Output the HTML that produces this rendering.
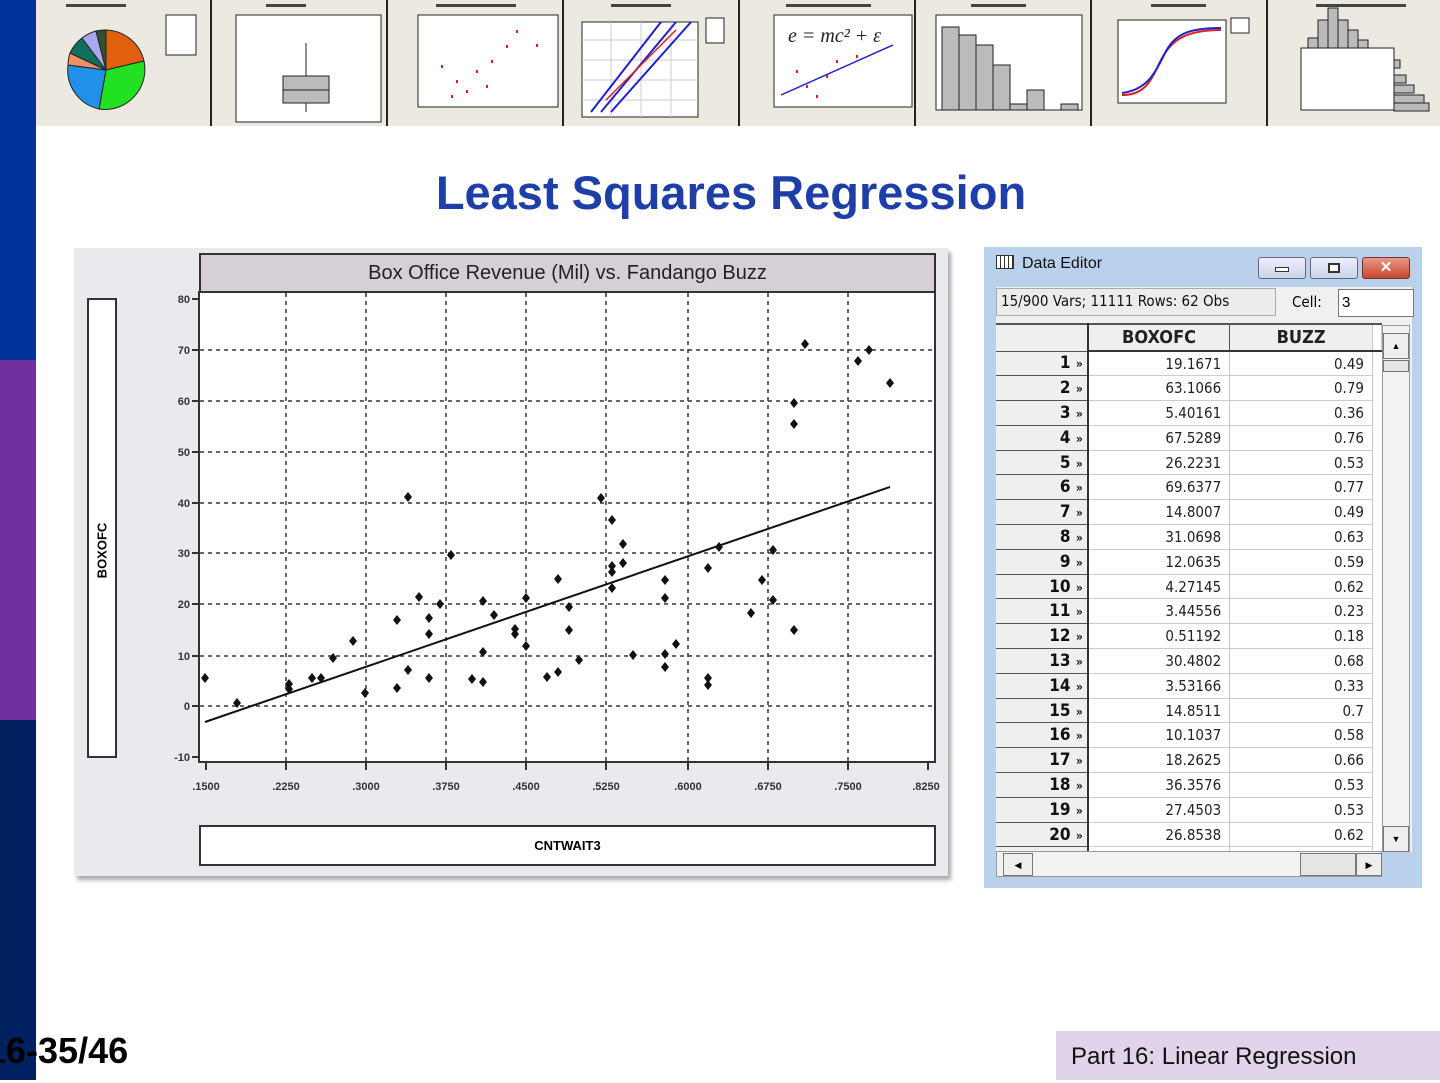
<!DOCTYPE html>
<html><head><meta charset="utf-8"><style>
*{margin:0;padding:0;box-sizing:border-box}
body{width:1440px;height:1080px;position:relative;background:#fff;font-family:"Liberation Sans",sans-serif;overflow:hidden}
.abs{position:absolute}
.de td{height:24.8px;border-right:1px solid #c8c8c8;border-bottom:1px solid #ccc;font-size:15px;text-align:right;padding-right:8px;color:#222;font-family:"DejaVu Sans Condensed","Liberation Sans Narrow",sans-serif}
.de td.h{background:#efefef;border-right:2px solid #333;border-bottom:1px solid #555;font-weight:bold;font-size:17px;color:#111;padding-right:4px}
</style></head><body>
<div class="abs" style="left:0;top:0;width:36px;height:360px;background:#003399"></div>
<div class="abs" style="left:0;top:360px;width:36px;height:360px;background:#7030a0"></div>
<div class="abs" style="left:0;top:720px;width:36px;height:360px;background:#002060"></div>

<svg class="abs" style="left:36px;top:0" width="1404" height="126" viewBox="0 0 1404 126">
<rect width="1404" height="126" fill="#ece9e0"/>
<g stroke="#222" stroke-width="2"><line x1="175" y1="0" x2="175" y2="126"/><line x1="351" y1="0" x2="351" y2="126"/><line x1="527" y1="0" x2="527" y2="126"/><line x1="703" y1="0" x2="703" y2="126"/><line x1="879" y1="0" x2="879" y2="126"/><line x1="1055" y1="0" x2="1055" y2="126"/><line x1="1231" y1="0" x2="1231" y2="126"/></g>
<g fill="#444"><rect x="30" y="4" width="60" height="3"/><rect x="230" y="4" width="40" height="3"/><rect x="400" y="4" width="80" height="3"/><rect x="575" y="4" width="60" height="3"/><rect x="750" y="4" width="85" height="3"/><rect x="935" y="4" width="55" height="3"/><rect x="1115" y="4" width="55" height="3"/><rect x="1280" y="4" width="90" height="3"/></g>
<g transform="translate(70,70)" stroke="#222" stroke-width="1">
<path d="M0,0 L0,-40 A40,40 0 0 1 38,-9 Z" fill="#e06010"/>
<path d="M0,0 L38,-9 A40,40 0 0 1 -7,39 Z" fill="#22e022"/>
<path d="M0,0 L-7,39 A40,40 0 0 1 -38,-5 Z" fill="#2090e8"/>
<path d="M0,0 L-38,-5 A40,40 0 0 1 -36,-17 Z" fill="#f09060"/>
<path d="M0,0 L-36,-17 A40,40 0 0 1 -24,-32 Z" fill="#107060"/>
<path d="M0,0 L-24,-32 A40,40 0 0 1 -10,-39 Z" fill="#a8a8f0"/>
<path d="M0,0 L-10,-39 A40,40 0 0 1 0,-40 Z" fill="#305030"/>
</g>
<rect x="130" y="15" width="30" height="40" fill="#fff" stroke="#222"/>
<rect x="200" y="15" width="145" height="107" fill="#fff" stroke="#222"/>
<line x1="270" y1="43" x2="270" y2="112" stroke="#222"/>
<rect x="247" y="76" width="46" height="27" fill="#bbb" stroke="#222"/>
<line x1="247" y1="90" x2="293" y2="90" stroke="#222"/>
<rect x="382" y="15" width="140" height="92" fill="#fff" stroke="#222"/>
<g fill="#e02020"><rect x="405" y="65" width="2" height="3"/><rect x="420" y="80" width="2" height="3"/><rect x="440" y="70" width="2" height="3"/><rect x="455" y="60" width="2" height="3"/><rect x="470" y="45" width="2" height="3"/><rect x="480" y="30" width="2" height="3"/><rect x="500" y="44" width="2" height="3"/><rect x="430" y="90" width="2" height="3"/><rect x="415" y="95" width="2" height="3"/><rect x="450" y="85" width="2" height="3"/></g>
<rect x="546" y="22" width="116" height="95" fill="#fff" stroke="#222"/>
<g stroke="#ccc"><line x1="546" y1="40" x2="662" y2="40"/><line x1="546" y1="60" x2="662" y2="60"/><line x1="546" y1="80" x2="662" y2="80"/><line x1="546" y1="100" x2="662" y2="100"/><line x1="575" y1="22" x2="575" y2="117"/><line x1="605" y1="22" x2="605" y2="117"/><line x1="635" y1="22" x2="635" y2="117"/></g>
<g stroke="#2020d0" stroke-width="2"><line x1="555" y1="112" x2="625" y2="22"/><line x1="565" y1="112" x2="640" y2="22"/><line x1="575" y1="112" x2="655" y2="22"/></g>
<line x1="570" y1="100" x2="640" y2="30" stroke="#e02020" stroke-width="1.5"/>
<rect x="670" y="18" width="18" height="25" fill="#fff" stroke="#222"/>
<rect x="738" y="15" width="138" height="92" fill="#fff" stroke="#222"/>
<text x="752" y="42" font-family="Liberation Serif,serif" font-style="italic" font-size="20" fill="#222">e = mc² + ε</text>
<line x1="745" y1="95" x2="857" y2="45" stroke="#2020d0" stroke-width="1.5"/>
<g fill="#e02020"><rect x="760" y="70" width="2" height="3"/><rect x="770" y="85" width="2" height="3"/><rect x="790" y="75" width="2" height="3"/><rect x="800" y="60" width="2" height="3"/><rect x="780" y="95" width="2" height="3"/><rect x="820" y="55" width="2" height="3"/></g>
<rect x="900" y="15" width="146" height="95" fill="#fff" stroke="#222"/>
<g fill="#bbb" stroke="#222"><rect x="906" y="27" width="17" height="83"/><rect x="923" y="35" width="17" height="75"/><rect x="940" y="45" width="17" height="65"/><rect x="957" y="65" width="17" height="45"/><rect x="974" y="104" width="17" height="6"/><rect x="991" y="90" width="17" height="20"/><rect x="1025" y="104" width="17" height="6"/></g>
<rect x="1082" y="20" width="108" height="83" fill="#fff" stroke="#222"/>
<path d="M1086,95 C1110,95 1115,80 1125,60 S1150,30 1185,30" stroke="#e02020" stroke-width="2" fill="none"/>
<path d="M1086,93 C1110,90 1118,75 1128,55 S1150,28 1185,28" stroke="#2020d0" stroke-width="2" fill="none"/>
<rect x="1195" y="18" width="18" height="15" fill="#fff" stroke="#222"/>
<g fill="#bbb" stroke="#222"><rect x="1272" y="38" width="10" height="10"/><rect x="1282" y="20" width="10" height="28"/><rect x="1292" y="8" width="10" height="40"/><rect x="1302" y="20" width="10" height="28"/><rect x="1312" y="30" width="10" height="18"/><rect x="1322" y="40" width="10" height="8"/></g>
<rect x="1265" y="48" width="93" height="62" fill="#fff" stroke="#222"/>
<g fill="#bbb" stroke="#222"><rect x="1358" y="60" width="6" height="8"/><rect x="1358" y="75" width="12" height="8"/><rect x="1358" y="85" width="20" height="8"/><rect x="1358" y="95" width="30" height="8"/><rect x="1358" y="103" width="35" height="8"/></g>
</svg>

<div class="abs" style="left:0;top:165px;width:1462px;text-align:center;font-weight:bold;font-size:47px;color:#1f3fa8">Least Squares Regression</div>

<div class="abs" style="left:74px;top:248px;width:874px;height:628px;background:#ebe9ee;box-shadow:3px 4px 4px #aaa"></div>
<div class="abs" style="left:199px;top:253px;width:737px;height:40px;background:#d6cfd6;border:2px solid #333;text-align:center;font-size:20px;line-height:37px;color:#222">Box Office Revenue (Mil) vs. Fandango Buzz</div>
<div class="abs" style="left:87px;top:298px;width:30px;height:460px;background:#fff;border:2px solid #333"></div>
<div class="abs" style="left:89px;top:528px;width:26px;transform:rotate(-90deg);font-weight:bold;font-size:13px;text-align:center;white-space:nowrap"><span style="display:inline-block;margin-left:-30px">BOXOFC</span></div>
<div class="abs" style="left:199px;top:825px;width:737px;height:41px;background:#fff;border:2px solid #333;text-align:center;font-weight:bold;font-size:13px;line-height:38px">CNTWAIT3</div>
<svg class="abs" style="left:150px;top:280px" width="800" height="530" viewBox="150 280 800 530">
<rect x="199" y="292" width="736" height="470" fill="#fff" stroke="#333" stroke-width="2"/>
<g stroke="#333" stroke-width="1.5" stroke-dasharray="4,4">
<line x1="200" y1="350" x2="934" y2="350"/><line x1="200" y1="401" x2="934" y2="401"/><line x1="200" y1="452" x2="934" y2="452"/><line x1="200" y1="503" x2="934" y2="503"/><line x1="200" y1="553" x2="934" y2="553"/><line x1="200" y1="604" x2="934" y2="604"/><line x1="200" y1="656" x2="934" y2="656"/><line x1="200" y1="706" x2="934" y2="706"/>
<line x1="286" y1="293" x2="286" y2="761"/><line x1="366" y1="293" x2="366" y2="761"/><line x1="446" y1="293" x2="446" y2="761"/><line x1="526" y1="293" x2="526" y2="761"/><line x1="606" y1="293" x2="606" y2="761"/><line x1="688" y1="293" x2="688" y2="761"/><line x1="768" y1="293" x2="768" y2="761"/><line x1="848" y1="293" x2="848" y2="761"/>
</g>
<g stroke="#333" stroke-width="2"><line x1="192" y1="299" x2="199" y2="299"/><line x1="192" y1="350" x2="199" y2="350"/><line x1="192" y1="401" x2="199" y2="401"/><line x1="192" y1="452" x2="199" y2="452"/><line x1="192" y1="503" x2="199" y2="503"/><line x1="192" y1="553" x2="199" y2="553"/><line x1="192" y1="604" x2="199" y2="604"/><line x1="192" y1="656" x2="199" y2="656"/><line x1="192" y1="706" x2="199" y2="706"/><line x1="192" y1="757" x2="199" y2="757"/>
<line x1="206" y1="762" x2="206" y2="770"/><line x1="286" y1="762" x2="286" y2="770"/><line x1="366" y1="762" x2="366" y2="770"/><line x1="446" y1="762" x2="446" y2="770"/><line x1="526" y1="762" x2="526" y2="770"/><line x1="606" y1="762" x2="606" y2="770"/><line x1="688" y1="762" x2="688" y2="770"/><line x1="768" y1="762" x2="768" y2="770"/><line x1="848" y1="762" x2="848" y2="770"/><line x1="928" y1="762" x2="928" y2="770"/></g>
<g font-family="Liberation Sans" font-weight="bold" font-size="11" fill="#333" text-anchor="end">
<text x="190" y="303">80</text><text x="190" y="354">70</text><text x="190" y="405">60</text><text x="190" y="456">50</text><text x="190" y="507">40</text><text x="190" y="557">30</text><text x="190" y="608">20</text><text x="190" y="660">10</text><text x="190" y="710">0</text><text x="190" y="761">-10</text></g>
<g font-family="Liberation Sans" font-weight="bold" font-size="11" fill="#333" text-anchor="middle">
<text x="206" y="790">.1500</text><text x="286" y="790">.2250</text><text x="366" y="790">.3000</text><text x="446" y="790">.3750</text><text x="526" y="790">.4500</text><text x="606" y="790">.5250</text><text x="688" y="790">.6000</text><text x="768" y="790">.6750</text><text x="848" y="790">.7500</text><text x="926" y="790">.8250</text></g>
<line x1="205" y1="722" x2="890" y2="487" stroke="#111" stroke-width="2"/>
<g fill="#111" id="pts"></g>
</svg>

<div class="abs" style="left:984px;top:247px;width:438px;height:641px;background:#b9d1ea"></div>
<div class="abs" style="left:996px;top:255px;font-size:16px;color:#111"><span style="display:inline-block;width:18px;height:14px;border:1px solid #333;background:repeating-linear-gradient(90deg,#fff 0 3px,#333 3px 4px),#fff;vertical-align:-1px;margin-right:8px"></span>Data Editor</div>
<div class="abs" style="left:1258px;top:257px;width:48px;height:22px;border:1px solid #667;border-radius:3px;background:linear-gradient(#eef,#c9d6e8)"><div style="margin:9px auto 0;width:14px;height:5px;border:1px solid #333;background:#fff"></div></div>
<div class="abs" style="left:1310px;top:257px;width:48px;height:22px;border:1px solid #667;border-radius:3px;background:linear-gradient(#eef,#c9d6e8)"><div style="margin:5px auto 0;width:12px;height:10px;border:2px solid #333;background:#fff"></div></div>
<div class="abs" style="left:1362px;top:257px;width:48px;height:22px;border:1px solid #733;border-radius:3px;background:linear-gradient(#e89a88,#c8452c);color:#fff;text-align:center;font-weight:bold;font-size:15px;line-height:20px">✕</div>
<div class="abs" style="left:996px;top:287px;width:416px;height:565px;background:#f0f0f0"></div>
<div class="abs" style="left:996px;top:288px;width:280px;height:28px;border:1px solid #aaa;background:#ececec;font-size:15px;padding:3px 4px;color:#111;font-family:'DejaVu Sans Condensed',sans-serif">15/900 Vars; 11111 Rows: 62 Obs</div>
<div class="abs" style="left:1292px;top:293px;font-size:15px;font-family:'DejaVu Sans Condensed',sans-serif">Cell:</div>
<div class="abs" style="left:1338px;top:289px;width:76px;height:28px;background:#fff;border:1px solid #777;font-size:15px;padding:4px 3px">3</div>
<div class="abs" style="left:996px;top:323px;width:386px;height:528px;overflow:hidden;background:#fff">
<table class="de" style="border-collapse:collapse;width:386px">
<tr><td class="h" style="width:92px;height:27px;border-top:2px solid #555"></td><td style="width:142px;height:27px;text-align:center;font-weight:bold;font-size:18px;background:#efefef;border-right:1px solid #555;border-bottom:2px solid #333;border-top:2px solid #555;padding:0">BOXOFC</td><td style="width:143px;text-align:center;font-weight:bold;font-size:18px;background:#efefef;border-bottom:2px solid #333;border-top:2px solid #555;padding:0">BUZZ</td><td style="background:#fff;border-bottom:2px solid #333;border-top:2px solid #555"></td></tr>
<tbody id="rows"></tbody></table></div>
<div class="abs" style="left:1382px;top:325px;width:28px;height:527px;background:#f2f2f2;border:1px solid #999"></div>
<div class="abs" style="left:1383px;top:333px;width:26px;height:26px;background:#eee;border:1px solid #777;text-align:center;font-size:9px;line-height:24px">▲</div>
<div class="abs" style="left:1383px;top:360px;width:26px;height:12px;background:#e6e6e6;border:1px solid #777"></div>
<div class="abs" style="left:1383px;top:826px;width:26px;height:26px;background:#eee;border:1px solid #777;text-align:center;font-size:9px;line-height:24px">▼</div>
<div class="abs" style="left:996px;top:851px;width:386px;height:26px;background:#f2f2f2;border:1px solid #999"></div>
<div class="abs" style="left:1003px;top:853px;width:30px;height:23px;background:#eee;border:1px solid #777;text-align:center;font-size:9px;line-height:22px">◀</div>
<div class="abs" style="left:1300px;top:853px;width:56px;height:23px;background:#e6e6e6;border:1px solid #777"></div>
<div class="abs" style="left:1356px;top:853px;width:26px;height:23px;background:#eee;border:1px solid #777;text-align:center;font-size:9px;line-height:22px">▶</div>

<div class="abs" style="left:-14px;top:1030px;font-weight:bold;font-size:36px;color:#000;white-space:nowrap">16-35/46</div>
<div class="abs" style="left:1056px;top:1031px;width:384px;height:49px;background:#e0d4ea;font-size:24px;line-height:52px;padding-left:15px;color:#111">Part 16: Linear Regression</div>

<script>
var P=[[205,678],[237,703],[289,684],[289,689],[312,678],[321,678],[333,658],[353,641],[365,693],[397,620],[397,688],[408,497],[408,670],[419,597],[429,618],[429,634],[429,678],[440,604],[451,555],[472,679],[483,601],[483,652],[483,682],[494,615],[515,629],[515,634],[526,598],[526,646],[547,677],[558,579],[558,672],[569,607],[569,630],[579,660],[601,498],[612,520],[612,566],[612,572],[612,588],[623,544],[623,563],[633,655],[665,580],[665,598],[665,654],[665,667],[676,644],[719,547],[708,568],[708,678],[708,685],[751,613],[762,580],[773,550],[773,600],[794,403],[794,424],[794,630],[805,344],[858,361],[869,350],[890,383]];
var g=document.getElementById('pts'),s='';
P.forEach(function(p){s+='<path d="M'+p[0]+','+(p[1]-5)+' L'+(p[0]+4)+','+p[1]+' L'+p[0]+','+(p[1]+5)+' L'+(p[0]-4)+','+p[1]+'Z"/>';});
g.innerHTML=s;
var D=[["19.1671","0.49"],["63.1066","0.79"],["5.40161","0.36"],["67.5289","0.76"],["26.2231","0.53"],["69.6377","0.77"],["14.8007","0.49"],["31.0698","0.63"],["12.0635","0.59"],["4.27145","0.62"],["3.44556","0.23"],["0.51192","0.18"],["30.4802","0.68"],["3.53166","0.33"],["14.8511","0.7"],["10.1037","0.58"],["18.2625","0.66"],["36.3576","0.53"],["27.4503","0.53"],["26.8538","0.62"],["",""]];
var r='';D.forEach(function(d,i){r+='<tr><td class="h">'+(i<20?(i+1)+' <span style="font-size:12px">»</span>':'')+'</td><td>'+d[0]+'</td><td>'+d[1]+'</td><td style="border:none"></td></tr>';});
document.getElementById('rows').innerHTML=r;
</script>
</body></html>
